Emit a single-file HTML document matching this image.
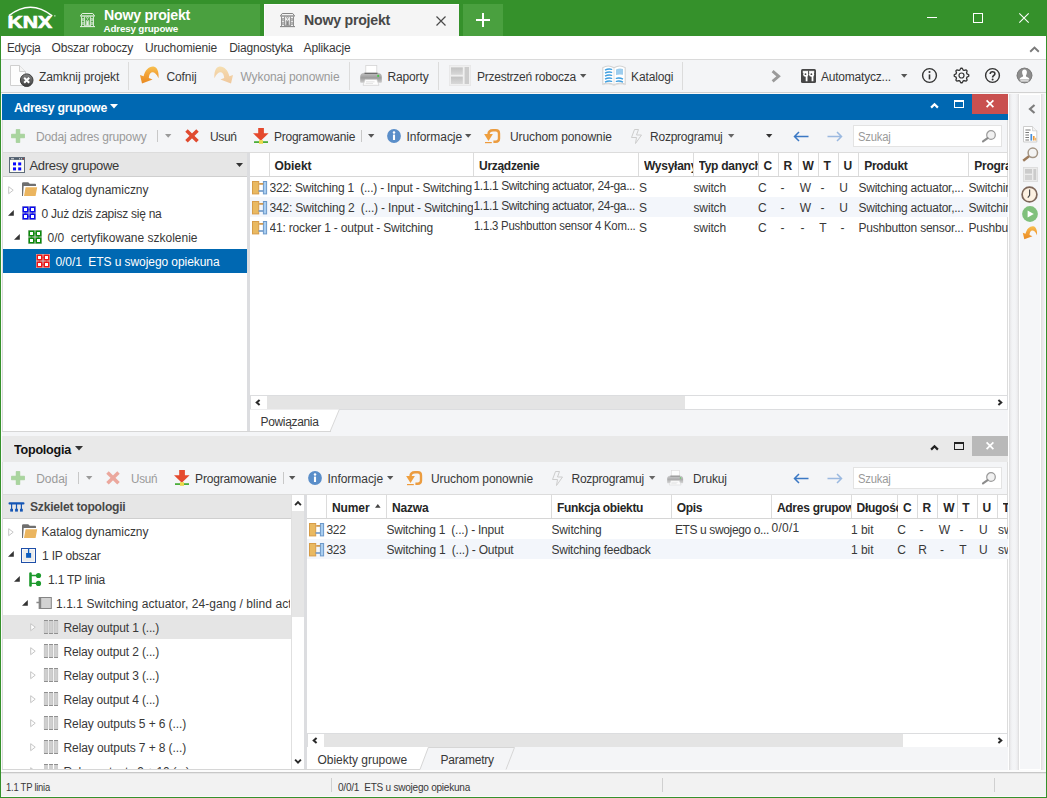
<!DOCTYPE html>
<html lang="pl"><head><meta charset="utf-8"><title>ETS5 - Nowy projekt</title><style>
html,body{margin:0;padding:0;}
body{width:1047px;height:798px;overflow:hidden;position:relative;background:#f0f0f0;font-family:"Liberation Sans",sans-serif;font-size:12px;color:#222;}
.b{position:absolute;box-sizing:border-box;}
.i{position:absolute;display:block;overflow:visible;}
.t{position:absolute;white-space:nowrap;display:block;}
</style></head><body>
<div class="b " style="left:0px;top:0px;width:1047px;height:798px;background:#35912b;"></div>
<div class="b " style="left:1px;top:36px;width:1045px;height:761px;background:#f0f0f0;"></div>
<svg class="i" style="left:6px;top:4px" width="52" height="28" viewBox="0 0 52 28"><path d="M3 11.6 Q24.5 -5.2 46.2 11.8" fill="none" stroke="#fff" stroke-width="1.7"/><text x="1.6" y="23.7" font-family="Liberation Sans, sans-serif" font-weight="700" font-size="16.5" fill="#fff" stroke="#fff" stroke-width=".7" textLength="44.6" lengthAdjust="spacingAndGlyphs">KNX</text><circle cx="48.8" cy="11.8" r="0.9" fill="#fff" opacity=".55"/></svg>
<div class="b " style="left:64px;top:4px;width:196px;height:32px;background:#4aa03f;"></div>
<div class="b " style="left:264px;top:4px;width:195px;height:32px;background:#f5f5f5;border-top:1px solid #fdfdfd;border-left:1px solid #fdfdfd;"></div>
<div class="b " style="left:463px;top:4px;width:40px;height:32px;background:#4aa03f;"></div>
<svg class="i" style="left:80px;top:13px" width="15" height="15" viewBox="0 0 15 15"><g fill="none" stroke="#e4f1e2" stroke-width="1"><path d="M0.5 2.8 L2.2 0.5 H12.8 L14.5 2.8"/><path d="M0.3 3 H14.7" stroke-width="1.3"/><path d="M1.5 3.5 V13 M13.5 3.5 V13 M4.6 3.5 V13 M10.4 3.5 V13" stroke-width=".9"/><path d="M0 13.6 H15" stroke-width="1.1"/><path d="M2.4 5.5 H3.8 V7.6 H2.4 Z M11.2 5.5 H12.6 V7.6 H11.2 Z M2.4 9.3 H3.8 V11.6 H2.4 Z M11.2 9.3 H12.6 V11.6 H11.2 Z" stroke-width=".7"/><path d="M6.3 12.6 V7.8 Q7.5 5.8 8.7 7.8 V12.6" stroke-width=".9"/><path d="M7.5 8.2 V12.4" stroke-width="1"/><circle cx="7.5" cy="4.6" r="0.9" stroke-width=".7"/><path d="M4.8 12.3 H10.2" stroke-width=".8"/></g></svg>
<svg class="i" style="left:280px;top:13px" width="15" height="15" viewBox="0 0 15 15"><g fill="none" stroke="#858585" stroke-width="1"><path d="M0.5 2.8 L2.2 0.5 H12.8 L14.5 2.8"/><path d="M0.3 3 H14.7" stroke-width="1.3"/><path d="M1.5 3.5 V13 M13.5 3.5 V13 M4.6 3.5 V13 M10.4 3.5 V13" stroke-width=".9"/><path d="M0 13.6 H15" stroke-width="1.1"/><path d="M2.4 5.5 H3.8 V7.6 H2.4 Z M11.2 5.5 H12.6 V7.6 H11.2 Z M2.4 9.3 H3.8 V11.6 H2.4 Z M11.2 9.3 H12.6 V11.6 H11.2 Z" stroke-width=".7"/><path d="M6.3 12.6 V7.8 Q7.5 5.8 8.7 7.8 V12.6" stroke-width=".9"/><path d="M7.5 8.2 V12.4" stroke-width="1"/><circle cx="7.5" cy="4.6" r="0.9" stroke-width=".7"/><path d="M4.8 12.3 H10.2" stroke-width=".8"/></g></svg>
<span class="t" id="t1" style="left:103.50px;top:5.699999999999999px;font-size:15px;line-height:18px;color:#fff;font-weight:700;letter-spacing:-0.250px;transform:scaleX(0.9431);transform-origin:0 0;">Nowy projekt</span>
<span class="t" id="t2" style="left:103.50px;top:22.8px;font-size:9.8px;line-height:12px;color:#fff;font-weight:700;letter-spacing:-0.162px;">Adresy grupowe</span>
<span class="t" id="t3" style="left:303.50px;top:11.0px;font-size:15px;line-height:18px;color:#484848;font-weight:700;letter-spacing:-0.250px;transform:scaleX(0.9431);transform-origin:0 0;">Nowy projekt</span>
<svg class="i" style="left:436px;top:15.5px" width="10" height="10" viewBox="0 0 10 10"><path d="M0.5 0.5 L9.5 9.5 M9.5 0.5 L0.5 9.5" stroke="#4a4a4a" stroke-width="1.2" fill="none"/></svg>
<svg class="i" style="left:476px;top:13px" width="14" height="14" viewBox="0 0 14 14"><path d="M7 0 V14 M0 7 H14" stroke="#fff" stroke-width="2" fill="none"/></svg>
<div class="b " style="left:927px;top:17px;width:10px;height:1px;background:#ffffff;"></div>
<svg class="i" style="left:973px;top:13px" width="10" height="10" viewBox="0 0 10 10"><rect x="0.5" y="0.5" width="9" height="9" fill="none" stroke="#fff" stroke-width="1"/></svg>
<svg class="i" style="left:1019px;top:13px" width="10" height="10" viewBox="0 0 10 10"><path d="M0.3 0.3 L9.7 9.7 M9.7 0.3 L0.3 9.7" stroke="#fff" stroke-width="1.1" fill="none"/></svg>
<div class="b " style="left:1px;top:36px;width:1045px;height:23px;background:#ffffff;"></div>
<div class="b " style="left:1px;top:59px;width:1045px;height:1px;background:#dadada;"></div>
<span class="t" id="t4" style="left:6.50px;top:39.5px;font-size:12px;line-height:16px;color:#383838;letter-spacing:-0.250px;transform:scaleX(0.9701);transform-origin:0 0;">Edycja</span>
<span class="t" id="t5" style="left:51.50px;top:39.5px;font-size:12px;line-height:16px;color:#383838;letter-spacing:-0.167px;">Obszar roboczy</span>
<span class="t" id="t6" style="left:144.90px;top:39.5px;font-size:12px;line-height:16px;color:#383838;letter-spacing:-0.154px;">Uruchomienie</span>
<span class="t" id="t7" style="left:229.20px;top:39.5px;font-size:12px;line-height:16px;color:#383838;letter-spacing:-0.232px;">Diagnostyka</span>
<span class="t" id="t8" style="left:303.50px;top:39.5px;font-size:12px;line-height:16px;color:#383838;letter-spacing:-0.115px;">Aplikacje</span>
<svg class="i" style="left:1028.5px;top:45.5px" width="11" height="7" viewBox="0 0 11 7"><path d="M1.2 5.8 L5.5 1.6 L9.8 5.8" fill="none" stroke="#7a7a7a" stroke-width="1.9"/></svg>
<div class="b " style="left:1px;top:60px;width:1045px;height:32px;background:#f4f5f7;"></div>
<div class="b " style="left:1px;top:92px;width:1045px;height:1px;background:#d2d2d2;"></div>
<div class="b " style="left:1px;top:93px;width:1045px;height:1px;background:#fafafa;"></div>
<svg class="i" style="left:10px;top:64px" width="24" height="24" viewBox="0 0 24 24"><defs><linearGradient id="dcg" x1="0" y1="0" x2="0" y2="1"><stop offset="0" stop-color="#858585"/><stop offset="1" stop-color="#3c3c3c"/></linearGradient></defs><path d="M0.5 1.5 H9.5 L15.5 7.5 V21.5 H0.5 Z" fill="#fdfdfd" stroke="#cfcfcf"/><path d="M9.5 1.5 V7.5 H15.5" fill="#f4f4f4" stroke="#cfcfcf"/><circle cx="16.7" cy="16.2" r="6.3" fill="url(#dcg)" stroke="#3d3d3d" stroke-width="1"/><path d="M14.2 13.7 L19.2 18.7 M19.2 13.7 L14.2 18.7" stroke="#fff" stroke-width="2"/></svg>
<span class="t" id="t9" style="left:39.00px;top:68.5px;font-size:12px;line-height:16px;color:#383838;letter-spacing:-0.077px;">Zamknij projekt</span>
<div class="b " style="left:128px;top:62px;width:1px;height:28px;background:#dcdcdc;"></div>
<svg class="i" style="left:139px;top:65px" width="22.0" height="20.0" viewBox="0 0 22.0 20.0"><defs><linearGradient id="ug139" x1="0" y1="0" x2="0" y2="1"><stop offset="0" stop-color="#f7c050"/><stop offset=".45" stop-color="#f2a238"/><stop offset="1" stop-color="#e98a22"/></linearGradient></defs><g transform="scale(1.0)" opacity="1.0"><path d="M3 18.6 L1 10 L4.6 11.3 C6 5 10 1.2 14.5 1.5 C18.6 2 20.1 8 19.5 13.2 C17.6 8.6 15 6.9 12.9 7.3 C11 7.7 10 10 9.8 13.1 L13.6 14.6 Z" fill="url(#ug139)"/></g></svg>
<span class="t" id="t10" style="left:166.50px;top:68.5px;font-size:12px;line-height:16px;color:#383838;letter-spacing:-0.115px;">Cofnij</span>
<svg class="i" style="left:212px;top:65px" width="22.0" height="20.0" viewBox="0 0 22.0 20.0"><defs><linearGradient id="ug212" x1="0" y1="0" x2="0" y2="1"><stop offset="0" stop-color="#f7c050"/><stop offset=".45" stop-color="#f2a238"/><stop offset="1" stop-color="#e98a22"/></linearGradient></defs><g transform="translate(22.0,0) scale(-1.0,1.0)" opacity="0.42"><path d="M3 18.6 L1 10 L4.6 11.3 C6 5 10 1.2 14.5 1.5 C18.6 2 20.1 8 19.5 13.2 C17.6 8.6 15 6.9 12.9 7.3 C11 7.7 10 10 9.8 13.1 L13.6 14.6 Z" fill="url(#ug212)"/></g></svg>
<span class="t" id="t11" style="left:240.50px;top:68.5px;font-size:12px;line-height:16px;color:#9a9a9a;letter-spacing:-0.102px;">Wykonaj ponownie</span>
<div class="b " style="left:349px;top:62px;width:1px;height:28px;background:#dcdcdc;"></div>
<svg class="i" style="left:360px;top:65px" width="22.0" height="21.0" viewBox="0 0 22 21"><defs><linearGradient id="pg360" x1="0" y1="0" x2="0" y2="1"><stop offset="0" stop-color="#c2c2c2"/><stop offset=".5" stop-color="#9c9c9c"/><stop offset="1" stop-color="#cdcdcd"/></linearGradient></defs><g opacity="1.0"><rect x="5.8" y="0.4" width="11" height="8" fill="#fff" stroke="#d4d4d4" stroke-width=".8"/><path d="M4 7.8 H18 Q21.8 8.2 21.8 12 V17 Q21.8 17.8 21 17.8 H1 Q0.2 17.8 0.2 17 V12 Q0.2 8.2 4 7.8 Z" fill="url(#pg360)"/><path d="M4.5 8.3 H17.5" stroke="#5e5e5e" stroke-width="1.1"/><path d="M5.2 14.4 H16.8 L19 20.3 H3 Z" fill="#fdfdfd" stroke="#cfcfcf" stroke-width=".7"/><path d="M6 16.8 H14.5 M5.6 18.4 H13" stroke="#dcdcdc" stroke-width=".8"/><circle cx="18.2" cy="10.9" r="1.05" fill="#44c544"/></g></svg>
<span class="t" id="t12" style="left:387.50px;top:68.5px;font-size:12px;line-height:16px;color:#383838;letter-spacing:-0.147px;">Raporty</span>
<div class="b " style="left:438px;top:62px;width:1px;height:28px;background:#dcdcdc;"></div>
<svg class="i" style="left:449.2px;top:65.3px" width="22" height="21" viewBox="0 0 22 21"><defs><linearGradient id="lig" x1="0" y1="0" x2="0" y2="1"><stop offset="0" stop-color="#c2c2c2"/><stop offset="1" stop-color="#d8d8d8"/></linearGradient></defs><rect x="0.4" y="0.4" width="21.2" height="20.2" fill="#efefef" stroke="#e6e6e6" stroke-width=".8"/><rect x="2" y="2.4" width="11.8" height="7.4" fill="url(#lig)"/><rect x="2" y="11.6" width="11.8" height="7.4" fill="url(#lig)"/><rect x="15.6" y="2" width="4.4" height="17" fill="#cccccc"/></svg>
<span class="t" id="t13" style="left:477.00px;top:68.5px;font-size:12px;line-height:16px;color:#383838;letter-spacing:-0.244px;">Przestrzeń robocza</span>
<svg class="i" style="left:580.3px;top:73.85px" width="6.4" height="3.7" viewBox="0 0 6.4 3.7"><path d="M0 0 H6.4 L3.2 3.7 Z" fill="#555"/></svg>
<svg class="i" style="left:602px;top:65px" width="24" height="21" viewBox="0 0 24 21"><path d="M0.8 2.6 C4 0.6 8.5 0.6 12 2.8 C15.5 0.6 20 0.6 23.2 2.6 V19.2 C20 17.8 15.5 17.8 12 19.8 C8.5 17.8 4 17.8 0.8 19.2 Z" fill="#fff" stroke="#d2d2d2" stroke-width="1.1"/><path d="M1 19.8 C4 18.6 8.5 18.6 12 20.4 C15.5 18.6 20 18.6 23 19.8" fill="none" stroke="#dcdcdc" stroke-width=".9"/><path d="M12 3 V19.6" stroke="#e2e2e2" stroke-width="1"/><g fill="none" stroke="#3f9fe0" stroke-width="1.3"><path d="M3 5.1000000000000005 Q6.5 3.3000000000000003 10.2 4.5"/><path d="M3 8.1 Q6.5 6.3 10.2 7.5"/><path d="M3 11.1 Q6.5 9.299999999999999 10.2 10.5"/><path d="M3 14.1 Q6.5 12.299999999999999 10.2 13.5"/><path d="M3 17.099999999999998 Q6.5 15.299999999999999 10.2 16.5"/><path d="M13.8 13.5 Q17.5 12.299999999999999 21 14.1"/><path d="M13.8 16.5 Q17.5 15.299999999999999 21 17.099999999999998"/></g><path d="M14 4.4 Q17.5 3 21 4 V9.8 Q17.5 9 14 10 Z" fill="#9dcdee"/></svg>
<span class="t" id="t14" style="left:631.10px;top:68.5px;font-size:12px;line-height:16px;color:#383838;letter-spacing:-0.134px;">Katalogi</span>
<div class="b " style="left:682px;top:62px;width:1px;height:28px;background:#dcdcdc;"></div>
<svg class="i" style="left:771px;top:69.5px" width="10" height="13" viewBox="0 0 10 13"><path d="M1.6 1.2 L7.6 6.3 L1.6 11.4" fill="none" stroke="#9a9a9a" stroke-width="2.9"/></svg>
<svg class="i" style="left:800.5px;top:69px" width="15" height="14" viewBox="0 0 15 14"><rect x="0" y="0" width="15" height="14" rx="1.5" fill="#474747"/><path d="M1.8 1.8 H13.2 V4 H1.8 Z" fill="#fff" opacity=".9"/><circle cx="4.7" cy="5.2" r="2.5" fill="#fff"/><circle cx="10.6" cy="5.2" r="2.5" fill="#fff"/><path d="M5.6 5 V12.2 M11.5 5 V12.2" stroke="#fff" stroke-width="1.8"/><circle cx="4.5" cy="5.2" r="0.9" fill="#474747"/><circle cx="10.4" cy="5.2" r="0.9" fill="#474747"/><path d="M7.6 1.5 V4.2" stroke="#474747" stroke-width="1"/></svg>
<span class="t" id="t15" style="left:821.00px;top:68.5px;font-size:12px;line-height:16px;color:#383838;letter-spacing:-0.216px;">Automatycz...</span>
<svg class="i" style="left:900.6px;top:73.85px" width="6.4" height="3.7" viewBox="0 0 6.4 3.7"><path d="M0 0 H6.4 L3.2 3.7 Z" fill="#555"/></svg>
<svg class="i" style="left:920.5px;top:67.3px" width="17" height="17" viewBox="0 0 17 17"><circle cx="8.5" cy="8.5" r="6.9" fill="none" stroke="#333" stroke-width="1.4"/><path d="M8.5 7.4 V12.4" stroke="#333" stroke-width="1.6"/><circle cx="8.5" cy="5" r="1.05" fill="#333"/></svg>
<svg class="i" style="left:952.5px;top:67.3px" width="17" height="17" viewBox="0 0 17 17"><path d="M15.76 7.78 L15.76 9.22 L13.95 10.15 L13.53 11.19 L14.14 13.13 L13.13 14.14 L11.19 13.53 L10.15 13.95 L9.22 15.76 L7.78 15.76 L6.85 13.95 L5.81 13.53 L3.87 14.14 L2.86 13.13 L3.47 11.19 L3.05 10.15 L1.24 9.22 L1.24 7.78 L3.05 6.85 L3.47 5.81 L2.86 3.87 L3.87 2.86 L5.81 3.47 L6.85 3.05 L7.78 1.24 L9.22 1.24 L10.15 3.05 L11.19 3.47 L13.13 2.86 L14.14 3.87 L13.53 5.81 L13.95 6.85 Z" fill="none" stroke="#333" stroke-width="1.3" stroke-linejoin="round"/><circle cx="8.5" cy="8.5" r="2.5" fill="none" stroke="#333" stroke-width="1.2"/></svg>
<svg class="i" style="left:984.4px;top:67.3px" width="17" height="17" viewBox="0 0 17 17"><circle cx="8.5" cy="8.5" r="6.9" fill="none" stroke="#333" stroke-width="1.4"/><path d="M6.2 6.9 C6.2 4 10.9 4 10.9 6.8 C10.9 8.5 8.6 8.4 8.6 10.5" fill="none" stroke="#333" stroke-width="1.6"/><circle cx="8.6" cy="12.6" r="1" fill="#333"/></svg>
<svg class="i" style="left:1016.4px;top:67.3px" width="17" height="17" viewBox="0 0 17 17"><circle cx="8.5" cy="8.5" r="7.8" fill="#8d8d8d"/><circle cx="8.5" cy="8.5" r="7.4" fill="none" stroke="#7a7a7a" stroke-width=".8"/><path d="M8.5 2.6 C10.3 2.6 11 4 10.9 5.6 C10.8 7.2 10.2 8 9.9 8.6 C9.8 9.6 10.6 10 12 10.6 C13.2 11.1 13.4 12 13.3 12.6 H3.7 C3.6 12 3.8 11.1 5 10.6 C6.4 10 7.2 9.6 7.1 8.6 C6.8 8 6.2 7.2 6.1 5.6 C6 4 6.7 2.6 8.5 2.6 Z" fill="#fff"/><path d="M4.4 13.9 H12.6" stroke="#fff" stroke-width="1.1"/></svg>
<div class="b " style="left:1008px;top:94px;width:1px;height:676px;background:#ffffff;"></div>
<div class="b " style="left:1009px;top:94px;width:10px;height:676px;background:linear-gradient(to right,#dadada 0,#e9e9eb 12%,#f2f3f5 30%,#f4f5f7 50%,#f2f3f5 70%,#e9e9eb 88%,#dadada 100%);"></div>
<div class="b " style="left:1019px;top:94px;width:22px;height:676px;background:#ffffff;"></div>
<div class="b " style="left:1020px;top:95px;width:20px;height:674px;background:#f5f6f8;"></div>
<div class="b " style="left:1041px;top:94px;width:5px;height:676px;background:linear-gradient(to right,#dcdcdc 0,#e8e8ea 30%,#f3f3f5 75%,#ffffff 100%);"></div>
<div class="b " style="left:2px;top:94px;width:1006px;height:338px;background:#ffffff;"></div>
<div class="b " style="left:2px;top:94px;width:1006px;height:26px;background:#0068b2;"></div>
<span class="t" id="t16" style="left:13.50px;top:99.5px;font-size:13px;line-height:16px;color:#fff;font-weight:700;letter-spacing:-0.250px;transform:scaleX(0.9455);transform-origin:0 0;">Adresy grupowe</span>
<svg class="i" style="left:110.0px;top:104.45px" width="8" height="4.5" viewBox="0 0 8 4.5"><path d="M0 0 H8 L4.0 4.5 Z" fill="#fff"/></svg>
<svg class="i" style="left:929.5px;top:101.5px" width="9" height="7" viewBox="0 0 9 7"><path d="M1.1 5.6 L4.5 2.2 L7.9 5.6" fill="none" stroke="#fff" stroke-width="2.2"/></svg>
<svg class="i" style="left:954px;top:100px" width="10" height="8" viewBox="0 0 10 8"><rect x="0.5" y="1" width="9" height="6.5" fill="none" stroke="#fff" stroke-width="1"/><path d="M0 1 H10" stroke="#fff" stroke-width="2"/></svg>
<div class="b " style="left:972px;top:94px;width:36px;height:20px;background:#c9504f;"></div>
<svg class="i" style="left:986px;top:100px" width="8" height="8" viewBox="0 0 8 8"><path d="M0.6 0.4 L7.4 7.2 M7.4 0.4 L0.6 7.2" stroke="#fff" stroke-width="1.7" fill="none"/></svg>
<div class="b " style="left:2px;top:120px;width:1006px;height:32px;background:#f4f5f7;"></div>
<div class="b " style="left:2px;top:152px;width:1006px;height:1px;background:#dcdcdc;"></div>
<svg class="i" style="left:11px;top:128.8px" width="14" height="14" viewBox="0 0 14 14"><path d="M5.2 0.5 H8.8 V5.2 H13.5 V8.8 H8.8 V13.5 H5.2 V8.8 H0.5 V5.2 H5.2 Z" fill="#a9d59e" stroke="#98c98c" stroke-width=".6" opacity="1.0"/></svg>
<span class="t" id="t17" style="left:36.00px;top:128.5px;font-size:12px;line-height:16px;color:#9a9a9a;letter-spacing:-0.153px;">Dodaj adres grupowy</span>
<div class="b " style="left:157px;top:130.0px;width:1px;height:12px;background:#c8c8c8;"></div>
<svg class="i" style="left:164.8px;top:133.85px" width="6.4" height="3.7" viewBox="0 0 6.4 3.7"><path d="M0 0 H6.4 L3.2 3.7 Z" fill="#9a9a9a"/></svg>
<svg class="i" style="left:185px;top:128.7px" width="14" height="14" viewBox="0 0 14 14"><path d="M1.5 1.5 L12.5 12.3 M12.5 1.5 L1.5 12.3" stroke="#e04a2f" stroke-width="3.5" fill="none" opacity="1.0"/></svg>
<span class="t" id="t18" style="left:210.00px;top:128.5px;font-size:12px;line-height:16px;color:#383838;letter-spacing:-0.379px;">Usuń</span>
<svg class="i" style="left:252.5px;top:127.5px" width="16" height="16" viewBox="0 0 16 16"><path d="M5.2 0 H10.9 V5.2 H15.6 L7.8 12.8 L0 5.2 H5.2 Z" fill="#e5492d"/><path d="M1 14.1 H15" stroke="#4cae3a" stroke-width="1.8"/><rect x="6" y="12.2" width="4" height="3.6" fill="#ead94a"/></svg>
<span class="t" id="t19" style="left:273.90px;top:128.5px;font-size:12px;line-height:16px;color:#383838;letter-spacing:-0.219px;">Programowanie</span>
<div class="b " style="left:361px;top:130.0px;width:1px;height:12px;background:#c8c8c8;"></div>
<svg class="i" style="left:367.8px;top:133.85px" width="6.4" height="3.7" viewBox="0 0 6.4 3.7"><path d="M0 0 H6.4 L3.2 3.7 Z" fill="#555"/></svg>
<svg class="i" style="left:387px;top:128.9px" width="14" height="14" viewBox="0 0 14 14"><circle cx="7" cy="7" r="6.9" fill="#5a8ec9"/><path d="M7 5.6 V11" stroke="#fff" stroke-width="2.1"/><circle cx="7" cy="3.5" r="1.25" fill="#fff"/></svg>
<span class="t" id="t20" style="left:406.50px;top:128.5px;font-size:12px;line-height:16px;color:#383838;letter-spacing:-0.043px;">Informacje</span>
<svg class="i" style="left:465.3px;top:133.85px" width="6.4" height="3.7" viewBox="0 0 6.4 3.7"><path d="M0 0 H6.4 L3.2 3.7 Z" fill="#555"/></svg>
<svg class="i" style="left:484px;top:128px" width="17" height="16" viewBox="0 0 17 16"><path d="M4.5 6.5 C4.5 3.4 6.3 2.2 9 2.2 H11.8 C14.2 2.2 15 3.2 15 5.4 V10.6 C15 12.8 14.2 13.8 11.8 13.8 H9.4" fill="none" stroke="#eb9c40" stroke-width="2.4"/><path d="M0.1 6 H8.9 L4.5 12.9 Z" fill="#ef9f3e"/><path d="M1 14.6 H7.8" stroke="#ee9a3a" stroke-width="1.2"/></svg>
<span class="t" id="t21" style="left:510.00px;top:128.5px;font-size:12px;line-height:16px;color:#383838;letter-spacing:-0.099px;">Uruchom ponownie</span>
<svg class="i" style="left:630.5px;top:129px" width="11" height="15" viewBox="0 0 11 15"><path d="M3.5 0.5 H7.5 L5.5 6 H10.5 L4.5 14.5 L5.5 8.5 H0.5 Z" fill="none" stroke="#cdcdcd" stroke-width="1" stroke-linejoin="round"/></svg>
<span class="t" id="t22" style="left:650.10px;top:128.5px;font-size:12px;line-height:16px;color:#383838;letter-spacing:-0.248px;">Rozprogramuj</span>
<svg class="i" style="left:727.8px;top:133.85px" width="6.4" height="3.7" viewBox="0 0 6.4 3.7"><path d="M0 0 H6.4 L3.2 3.7 Z" fill="#666"/></svg>
<svg class="i" style="left:765.8px;top:133.85px" width="6.4" height="3.7" viewBox="0 0 6.4 3.7"><path d="M0 0 H6.4 L3.2 3.7 Z" fill="#333"/></svg>
<svg class="i" style="left:793px;top:131px" width="16" height="11" viewBox="0 0 16 11"><path d="M15.5 5.5 H1.5 M6 1 L1.5 5.5 L6 10" fill="none" stroke="#3b78c4" stroke-width="1.5"/></svg>
<svg class="i" style="left:826.5px;top:131px" width="16" height="11" viewBox="0 0 16 11"><path d="M0.5 5.5 H14.5 M10 1 L14.5 5.5 L10 10" fill="none" stroke="#9bb9e0" stroke-width="1.5"/></svg>
<div class="b " style="left:853px;top:125px;width:149px;height:22px;background:#ffffff;border:1px solid #e3e3e3;"></div>
<span class="t" id="t23" style="left:858.00px;top:128.5px;font-size:12px;line-height:16px;color:#9a9a9a;letter-spacing:-0.250px;transform:scaleX(0.9412);transform-origin:0 0;">Szukaj</span>
<svg class="i" style="left:981px;top:129.5px" width="15" height="15" viewBox="0 0 15 15"><circle cx="10" cy="5" r="4.3" fill="#f1f1f1" stroke="#9a9a9a" stroke-width="1.2"/><path d="M6.6 8.2 L2 11.4" stroke="#8c8c8c" stroke-width="2.1" stroke-linecap="round"/></svg>
<div class="b " style="left:1007px;top:120px;width:1px;height:312px;background:#dcdcdc;"></div>
<div class="b " style="left:2px;top:153px;width:245px;height:23px;background:#e6e6e6;"></div>
<div class="b " style="left:2px;top:176px;width:245px;height:1px;background:#cfcfcf;"></div>
<div class="b " style="left:247px;top:153px;width:3px;height:279px;background:#dcdde0;"></div>
<div class="b " style="left:1px;top:94px;width:1px;height:676px;background:#fafafa;"></div>
<div class="b " style="left:2px;top:120px;width:1px;height:312px;background:#dcdcdc;"></div>
<svg class="i" style="left:9px;top:157px" width="16" height="16" viewBox="0 0 16 16"><rect x="0.5" y="0.5" width="15" height="15" fill="#fdfdf4" stroke="#5f6c7b"/><path d="M1 1.9 H15" stroke="#4f5d6d" stroke-width="2"/><path d="M2 1.8 H5" stroke="#e8e8e8" stroke-width="1"/><path d="M10 1.8 H11 M12 1.8 H13" stroke="#f0f0f0" stroke-width="1"/><path d="M14 1.8 H15" stroke="#d03020" stroke-width="1"/><g fill="#0a0aff"><rect x="4" y="5.4" width="3" height="3"/><rect x="9.2" y="5.4" width="3" height="3"/><rect x="4" y="10.4" width="3" height="3"/><rect x="9.2" y="10.4" width="3" height="3"/></g></svg>
<span class="t" id="t24" style="left:29.50px;top:157.5px;font-size:13px;line-height:16px;color:#383838;letter-spacing:-0.318px;">Adresy grupowe</span>
<svg class="i" style="left:235.5px;top:162.7px" width="7" height="4" viewBox="0 0 7 4"><path d="M0 0 H7 L3.5 4 Z" fill="#333"/></svg>
<svg class="i" style="left:7.5px;top:185.8px" width="7" height="9" viewBox="0 0 7 9"><path d="M0.7 0.7 L5.2 4.2 L0.7 7.7 Z" fill="#fff" stroke="#c6c6c6" stroke-width="1"/></svg>
<svg class="i" style="left:21px;top:182px" width="17" height="15" viewBox="0 0 17 15"><path d="M1 14 V1.6 Q1 0.2 2.4 0.2 H7.2 L8.8 1.8 H14.2 Q15 1.8 15 2.8 V4 H2.7 L2 14 Z" fill="#6f6f6f"/><path d="M4.6 5.2 H16.2 L14.6 13.9 H3 Z" fill="#ebb55f"/></svg>
<span class="t" id="t25" style="left:41.50px;top:182.0px;font-size:12px;line-height:16px;color:#383838;letter-spacing:-0.022px;">Katalog dynamiczny</span>
<svg class="i" style="left:8px;top:210.3px" width="6" height="6" viewBox="0 0 6 6"><path d="M5.8 0 V5.8 H0 Z" fill="#333"/></svg>
<svg class="i" style="left:22px;top:206px" width="14" height="14" viewBox="0 0 14 14"><rect x="0" y="0" width="14" height="14" fill="#c8c8c8"/><g fill="#fff" stroke="#0a0af0" stroke-width="1.5"><rect x="1.25" y="1.25" width="4.5" height="4.5"/><rect x="1.25" y="8.25" width="4.5" height="4.5"/><rect x="8.25" y="1.25" width="4.5" height="4.5"/><rect x="8.25" y="8.25" width="4.5" height="4.5"/></g><path d="M6.5 3.5 H7.5 M6.5 10.5 H7.5 M3.5 6.5 V7.5 M10.5 6.5 V7.5" stroke="#0a0af0" stroke-width="1.5"/></svg>
<span class="t" id="t26" style="left:41.50px;top:206.0px;font-size:12px;line-height:16px;color:#383838;letter-spacing:-0.253px;">0 Już dziś zapisz się na</span>
<svg class="i" style="left:14px;top:234.3px" width="6" height="6" viewBox="0 0 6 6"><path d="M5.8 0 V5.8 H0 Z" fill="#333"/></svg>
<svg class="i" style="left:28px;top:230px" width="14" height="14" viewBox="0 0 14 14"><rect x="0" y="0" width="14" height="14" fill="#c8c8c8"/><g fill="#fff" stroke="#0a8a0a" stroke-width="1.5"><rect x="1.25" y="1.25" width="4.5" height="4.5"/><rect x="1.25" y="8.25" width="4.5" height="4.5"/><rect x="8.25" y="1.25" width="4.5" height="4.5"/><rect x="8.25" y="8.25" width="4.5" height="4.5"/></g><path d="M6.5 3.5 H7.5 M6.5 10.5 H7.5 M3.5 6.5 V7.5 M10.5 6.5 V7.5" stroke="#0a8a0a" stroke-width="1.5"/></svg>
<span class="t" id="t27" style="left:47.50px;top:230.0px;font-size:12px;line-height:16px;color:#383838;letter-spacing:-0.003px;">0/0 &nbsp;certyfikowane szkolenie</span>
<div class="b " style="left:3px;top:249px;width:244px;height:24px;background:#0068b2;"></div>
<svg class="i" style="left:36px;top:254px" width="14" height="14" viewBox="0 0 14 14"><rect x="0" y="0" width="14" height="14" fill="#c8c8c8"/><g fill="#fff" stroke="#f01414" stroke-width="1.5"><rect x="1.25" y="1.25" width="4.5" height="4.5"/><rect x="1.25" y="8.25" width="4.5" height="4.5"/><rect x="8.25" y="1.25" width="4.5" height="4.5"/><rect x="8.25" y="8.25" width="4.5" height="4.5"/></g><path d="M6.5 3.5 H7.5 M6.5 10.5 H7.5 M3.5 6.5 V7.5 M10.5 6.5 V7.5" stroke="#f01414" stroke-width="1.5"/></svg>
<span class="t" id="t28" style="left:55.50px;top:253.5px;font-size:12px;line-height:16px;color:#fff;letter-spacing:-0.073px;">0/0/1 &nbsp;ETS u swojego opiekuna</span>
<div class="b " style="left:250px;top:176px;width:758px;height:1px;background:#d6d6d6;"></div>
<div class="b " style="left:269px;top:153px;width:1px;height:23px;background:#dcdcdc;"></div>
<div class="b " style="left:473px;top:153px;width:1px;height:23px;background:#dcdcdc;"></div>
<div class="b " style="left:638px;top:153px;width:1px;height:23px;background:#dcdcdc;"></div>
<div class="b " style="left:693px;top:153px;width:1px;height:23px;background:#dcdcdc;"></div>
<div class="b " style="left:758px;top:153px;width:1px;height:23px;background:#dcdcdc;"></div>
<div class="b " style="left:778px;top:153px;width:1px;height:23px;background:#dcdcdc;"></div>
<div class="b " style="left:798px;top:153px;width:1px;height:23px;background:#dcdcdc;"></div>
<div class="b " style="left:818px;top:153px;width:1px;height:23px;background:#dcdcdc;"></div>
<div class="b " style="left:838px;top:153px;width:1px;height:23px;background:#dcdcdc;"></div>
<div class="b " style="left:858px;top:153px;width:1px;height:23px;background:#dcdcdc;"></div>
<div class="b " style="left:968px;top:153px;width:1px;height:23px;background:#dcdcdc;"></div>
<span class="t" id="t29" style="left:274.50px;top:157.5px;font-size:12px;line-height:16px;color:#262626;font-weight:700;letter-spacing:-0.057px;">Obiekt</span>
<span class="t" id="t30" style="left:479.00px;top:157.5px;font-size:12px;line-height:16px;color:#262626;font-weight:700;letter-spacing:-0.286px;">Urządzenie</span>
<span class="t" id="t31" style="left:644.00px;top:157.5px;font-size:12px;line-height:16px;color:#262626;font-weight:700;letter-spacing:-0.261px;width:49.00px;overflow:hidden;">Wysyłany</span>
<span class="t" id="t32" style="left:698.50px;top:157.5px;font-size:12px;line-height:16px;color:#262626;font-weight:700;letter-spacing:-0.261px;width:59.50px;overflow:hidden;">Typ danych</span>
<span class="t" id="t33" style="left:763.50px;top:157.5px;font-size:12px;line-height:16px;color:#262626;font-weight:700;letter-spacing:-0.261px;">C</span>
<span class="t" id="t34" style="left:783.50px;top:157.5px;font-size:12px;line-height:16px;color:#262626;font-weight:700;letter-spacing:-0.261px;">R</span>
<span class="t" id="t35" style="left:802.50px;top:157.5px;font-size:12px;line-height:16px;color:#262626;font-weight:700;letter-spacing:-0.261px;">W</span>
<span class="t" id="t36" style="left:823.50px;top:157.5px;font-size:12px;line-height:16px;color:#262626;font-weight:700;letter-spacing:-0.261px;">T</span>
<span class="t" id="t37" style="left:843.50px;top:157.5px;font-size:12px;line-height:16px;color:#262626;font-weight:700;letter-spacing:-0.261px;">U</span>
<span class="t" id="t38" style="left:864.20px;top:157.5px;font-size:12px;line-height:16px;color:#262626;font-weight:700;letter-spacing:-0.292px;">Produkt</span>
<span class="t" id="t39" style="left:974.30px;top:157.5px;font-size:12px;line-height:16px;color:#262626;font-weight:700;letter-spacing:-0.261px;width:33.70px;overflow:hidden;">Program aplikacyjny</span>
<div class="b " style="left:250px;top:197px;width:758px;height:20px;background:#f3f6fb;"></div>
<svg class="i" style="left:252px;top:181.0px" width="15" height="14" viewBox="0 0 15 14"><rect x="0.5" y="0.5" width="6.2" height="12.4" fill="#e9b961" stroke="#d69c48"/><rect x="11.4" y="0.5" width="3.2" height="12.4" fill="#a9cef1" stroke="#6c98c9"/><path d="M7.2 2.9 H11.2" stroke="#cb9040" stroke-width="1.6"/><path d="M6.6 10 H11" stroke="#6c98c9" stroke-width="1.6"/></svg>
<span class="t" id="t40" style="left:269.50px;top:179.5px;font-size:12px;line-height:16px;color:#383838;letter-spacing:-0.225px;width:203.50px;overflow:hidden;">322: Switching 1 &nbsp;(...) - Input - Switching</span>
<span class="t" id="t41" style="left:473.50px;top:177.5px;font-size:12px;line-height:16px;color:#383838;letter-spacing:-0.391px;width:164.50px;overflow:hidden;">1.1.1 Switching actuator, 24-ga...</span>
<span class="t" id="t42" style="left:639.00px;top:179.5px;font-size:12px;line-height:16px;color:#383838;letter-spacing:-0.187px;">S</span>
<span class="t" id="t43" style="left:693.50px;top:179.5px;font-size:12px;line-height:16px;color:#383838;letter-spacing:-0.141px;">switch</span>
<span class="t" id="t44" style="left:758.01px;top:179.5px;font-size:12px;line-height:16px;color:#383838;">C</span>
<span class="t" id="t45" style="left:780.50px;top:179.5px;font-size:12px;line-height:16px;color:#383838;letter-spacing:-0.187px;">-</span>
<span class="t" id="t46" style="left:799.69px;top:179.5px;font-size:12px;line-height:16px;color:#383838;">W</span>
<span class="t" id="t47" style="left:820.50px;top:179.5px;font-size:12px;line-height:16px;color:#383838;letter-spacing:-0.187px;">-</span>
<span class="t" id="t48" style="left:839.16px;top:179.5px;font-size:12px;line-height:16px;color:#383838;">U</span>
<span class="t" id="t49" style="left:858.50px;top:179.5px;font-size:12px;line-height:16px;color:#383838;letter-spacing:-0.261px;">Switching actuator,...</span>
<span class="t" id="t50" style="left:968.50px;top:179.5px;font-size:12px;line-height:16px;color:#383838;letter-spacing:-0.187px;width:39.50px;overflow:hidden;">Switching actuator</span>
<svg class="i" style="left:252px;top:201.0px" width="15" height="14" viewBox="0 0 15 14"><rect x="0.5" y="0.5" width="6.2" height="12.4" fill="#e9b961" stroke="#d69c48"/><rect x="11.4" y="0.5" width="3.2" height="12.4" fill="#a9cef1" stroke="#6c98c9"/><path d="M7.2 2.9 H11.2" stroke="#cb9040" stroke-width="1.6"/><path d="M6.6 10 H11" stroke="#6c98c9" stroke-width="1.6"/></svg>
<span class="t" id="t51" style="left:269.50px;top:199.5px;font-size:12px;line-height:16px;color:#383838;letter-spacing:-0.187px;width:203.50px;overflow:hidden;">342: Switching 2 &nbsp;(...) - Input - Switching</span>
<span class="t" id="t52" style="left:473.50px;top:197.5px;font-size:12px;line-height:16px;color:#383838;letter-spacing:-0.391px;width:164.50px;overflow:hidden;">1.1.1 Switching actuator, 24-ga...</span>
<span class="t" id="t53" style="left:639.00px;top:199.5px;font-size:12px;line-height:16px;color:#383838;letter-spacing:-0.187px;">S</span>
<span class="t" id="t54" style="left:693.50px;top:199.5px;font-size:12px;line-height:16px;color:#383838;letter-spacing:-0.141px;">switch</span>
<span class="t" id="t55" style="left:758.01px;top:199.5px;font-size:12px;line-height:16px;color:#383838;">C</span>
<span class="t" id="t56" style="left:780.50px;top:199.5px;font-size:12px;line-height:16px;color:#383838;letter-spacing:-0.187px;">-</span>
<span class="t" id="t57" style="left:799.69px;top:199.5px;font-size:12px;line-height:16px;color:#383838;">W</span>
<span class="t" id="t58" style="left:820.50px;top:199.5px;font-size:12px;line-height:16px;color:#383838;letter-spacing:-0.187px;">-</span>
<span class="t" id="t59" style="left:839.16px;top:199.5px;font-size:12px;line-height:16px;color:#383838;">U</span>
<span class="t" id="t60" style="left:858.50px;top:199.5px;font-size:12px;line-height:16px;color:#383838;letter-spacing:-0.261px;">Switching actuator,...</span>
<span class="t" id="t61" style="left:968.50px;top:199.5px;font-size:12px;line-height:16px;color:#383838;letter-spacing:-0.187px;width:39.50px;overflow:hidden;">Switching actuator</span>
<svg class="i" style="left:252px;top:221.0px" width="15" height="14" viewBox="0 0 15 14"><rect x="0.5" y="0.5" width="6.2" height="12.4" fill="#e9b961" stroke="#d69c48"/><rect x="11.4" y="0.5" width="3.2" height="12.4" fill="#a9cef1" stroke="#6c98c9"/><path d="M7.2 2.9 H11.2" stroke="#cb9040" stroke-width="1.6"/><path d="M6.6 10 H11" stroke="#6c98c9" stroke-width="1.6"/></svg>
<span class="t" id="t62" style="left:269.50px;top:219.5px;font-size:12px;line-height:16px;color:#383838;letter-spacing:-0.182px;width:203.50px;overflow:hidden;">41: rocker 1 - output - Switching</span>
<span class="t" id="t63" style="left:473.50px;top:217.5px;font-size:12px;line-height:16px;color:#383838;letter-spacing:-0.250px;transform:scaleX(0.9494);transform-origin:0 0;width:173.27px;overflow:hidden;">1.1.3 Pushbutton sensor 4 Kom...</span>
<span class="t" id="t64" style="left:639.00px;top:219.5px;font-size:12px;line-height:16px;color:#383838;letter-spacing:-0.187px;">S</span>
<span class="t" id="t65" style="left:693.50px;top:219.5px;font-size:12px;line-height:16px;color:#383838;letter-spacing:-0.141px;">switch</span>
<span class="t" id="t66" style="left:758.01px;top:219.5px;font-size:12px;line-height:16px;color:#383838;">C</span>
<span class="t" id="t67" style="left:780.50px;top:219.5px;font-size:12px;line-height:16px;color:#383838;letter-spacing:-0.187px;">-</span>
<span class="t" id="t68" style="left:800.50px;top:219.5px;font-size:12px;line-height:16px;color:#383838;letter-spacing:-0.187px;">-</span>
<span class="t" id="t69" style="left:819.33px;top:219.5px;font-size:12px;line-height:16px;color:#383838;">T</span>
<span class="t" id="t70" style="left:840.50px;top:219.5px;font-size:12px;line-height:16px;color:#383838;letter-spacing:-0.187px;">-</span>
<span class="t" id="t71" style="left:858.50px;top:219.5px;font-size:12px;line-height:16px;color:#383838;letter-spacing:-0.220px;">Pushbutton sensor...</span>
<span class="t" id="t72" style="left:968.50px;top:219.5px;font-size:12px;line-height:16px;color:#383838;letter-spacing:-0.187px;width:39.50px;overflow:hidden;">Pushbutton sensor</span>
<div class="b " style="left:250px;top:395px;width:758px;height:15px;background:#ffffff;border:1px solid #dcdddf;"></div>
<div class="b " style="left:267px;top:396px;width:418px;height:13px;background:#e4e4e4;"></div>
<svg class="i" style="left:255px;top:399px" width="6" height="7" viewBox="0 0 6 7"><path d="M4.6 0.9 L1.7 3.5 L4.6 6.1" fill="none" stroke="#2a2a2a" stroke-width="2"/></svg>
<svg class="i" style="left:997px;top:399px" width="6" height="7" viewBox="0 0 6 7"><path d="M1.4 0.9 L4.3 3.5 L1.4 6.1" fill="none" stroke="#2a2a2a" stroke-width="2"/></svg>
<div class="b " style="left:250px;top:410px;width:758px;height:22px;background:#f4f5f7;"></div>
<svg class="i" style="left:250px;top:409px" width="100" height="23" viewBox="0 0 100 23"><path d="M0 0.5 H89.3 L80.2 22.3 H0 Z" fill="#fff"/><path d="M89.3 0.5 L80.2 22.3" stroke="#d9d9d9" stroke-width="1" fill="none"/></svg>
<span class="t" id="t73" style="left:260.50px;top:413.5px;font-size:12px;line-height:16px;color:#383838;letter-spacing:-0.338px;">Powiązania</span>
<div class="b " style="left:2px;top:432px;width:1006px;height:4px;background:#f4f5f7;"></div>
<div class="b " style="left:2px;top:431px;width:329px;height:1px;background:#d6d6d6;"></div>
<div class="b " style="left:2px;top:436px;width:1006px;height:335px;background:#ffffff;"></div>
<div class="b " style="left:2px;top:436px;width:1006px;height:26px;background:#e9e9e9;"></div>
<span class="t" id="t74" style="left:13.50px;top:441.5px;font-size:13px;line-height:16px;color:#111;font-weight:700;letter-spacing:-0.250px;transform:scaleX(0.9679);transform-origin:0 0;">Topologia</span>
<svg class="i" style="left:74.5px;top:446.45px" width="8" height="4.5" viewBox="0 0 8 4.5"><path d="M0 0 H8 L4.0 4.5 Z" fill="#333"/></svg>
<svg class="i" style="left:929.5px;top:443.5px" width="9" height="7" viewBox="0 0 9 7"><path d="M1.1 5.6 L4.5 2.2 L7.9 5.6" fill="none" stroke="#222" stroke-width="2.2"/></svg>
<svg class="i" style="left:954px;top:442px" width="10" height="8" viewBox="0 0 10 8"><rect x="0.5" y="1" width="9" height="6.5" fill="none" stroke="#222" stroke-width="1"/><path d="M0 1 H10" stroke="#222" stroke-width="2"/></svg>
<div class="b " style="left:972px;top:436px;width:36px;height:20px;background:#b9b9b9;"></div>
<svg class="i" style="left:986px;top:442px" width="8" height="8" viewBox="0 0 8 8"><path d="M0.6 0.4 L7.4 7.2 M7.4 0.4 L0.6 7.2" stroke="#fff" stroke-width="1.7" fill="none"/></svg>
<div class="b " style="left:2px;top:462px;width:1006px;height:32px;background:#f4f5f7;"></div>
<div class="b " style="left:2px;top:494px;width:1006px;height:1px;background:#dcdcdc;"></div>
<svg class="i" style="left:11px;top:470.8px" width="14" height="14" viewBox="0 0 14 14"><path d="M5.2 0.5 H8.8 V5.2 H13.5 V8.8 H8.8 V13.5 H5.2 V8.8 H0.5 V5.2 H5.2 Z" fill="#a9d59e" stroke="#98c98c" stroke-width=".6" opacity="1.0"/></svg>
<span class="t" id="t75" style="left:36.20px;top:470.5px;font-size:12px;line-height:16px;color:#9a9a9a;letter-spacing:-0.012px;">Dodaj</span>
<div class="b " style="left:78px;top:472.0px;width:1px;height:12px;background:#c8c8c8;"></div>
<svg class="i" style="left:85.8px;top:475.85px" width="6.4" height="3.7" viewBox="0 0 6.4 3.7"><path d="M0 0 H6.4 L3.2 3.7 Z" fill="#9a9a9a"/></svg>
<svg class="i" style="left:106px;top:470.7px" width="14" height="14" viewBox="0 0 14 14"><path d="M1.5 1.5 L12.5 12.3 M12.5 1.5 L1.5 12.3" stroke="#e04a2f" stroke-width="3.5" fill="none" opacity="0.45"/></svg>
<span class="t" id="t76" style="left:131.20px;top:470.5px;font-size:12px;line-height:16px;color:#9a9a9a;letter-spacing:-0.250px;transform:scaleX(0.9735);transform-origin:0 0;">Usuń</span>
<svg class="i" style="left:173.5px;top:469.5px" width="16" height="16" viewBox="0 0 16 16"><path d="M5.2 0 H10.9 V5.2 H15.6 L7.8 12.8 L0 5.2 H5.2 Z" fill="#e5492d"/><path d="M1 14.1 H15" stroke="#4cae3a" stroke-width="1.8"/><rect x="6" y="12.2" width="4" height="3.6" fill="#ead94a"/></svg>
<span class="t" id="t77" style="left:195.10px;top:470.5px;font-size:12px;line-height:16px;color:#383838;letter-spacing:-0.204px;">Programowanie</span>
<div class="b " style="left:283px;top:472.0px;width:1px;height:12px;background:#c8c8c8;"></div>
<svg class="i" style="left:288.8px;top:475.85px" width="6.4" height="3.7" viewBox="0 0 6.4 3.7"><path d="M0 0 H6.4 L3.2 3.7 Z" fill="#555"/></svg>
<svg class="i" style="left:308px;top:470.9px" width="14" height="14" viewBox="0 0 14 14"><circle cx="7" cy="7" r="6.9" fill="#5a8ec9"/><path d="M7 5.6 V11" stroke="#fff" stroke-width="2.1"/><circle cx="7" cy="3.5" r="1.25" fill="#fff"/></svg>
<span class="t" id="t78" style="left:327.50px;top:470.5px;font-size:12px;line-height:16px;color:#383838;letter-spacing:-0.043px;">Informacje</span>
<svg class="i" style="left:386.8px;top:475.85px" width="6.4" height="3.7" viewBox="0 0 6.4 3.7"><path d="M0 0 H6.4 L3.2 3.7 Z" fill="#555"/></svg>
<svg class="i" style="left:405.5px;top:470px" width="17" height="16" viewBox="0 0 17 16"><path d="M4.5 6.5 C4.5 3.4 6.3 2.2 9 2.2 H11.8 C14.2 2.2 15 3.2 15 5.4 V10.6 C15 12.8 14.2 13.8 11.8 13.8 H9.4" fill="none" stroke="#eb9c40" stroke-width="2.4"/><path d="M0.1 6 H8.9 L4.5 12.9 Z" fill="#ef9f3e"/><path d="M1 14.6 H7.8" stroke="#ee9a3a" stroke-width="1.2"/></svg>
<span class="t" id="t79" style="left:431.00px;top:470.5px;font-size:12px;line-height:16px;color:#383838;letter-spacing:-0.087px;">Uruchom ponownie</span>
<svg class="i" style="left:552px;top:471px" width="11" height="15" viewBox="0 0 11 15"><path d="M3.5 0.5 H7.5 L5.5 6 H10.5 L4.5 14.5 L5.5 8.5 H0.5 Z" fill="none" stroke="#cdcdcd" stroke-width="1" stroke-linejoin="round"/></svg>
<span class="t" id="t80" style="left:571.50px;top:470.5px;font-size:12px;line-height:16px;color:#383838;letter-spacing:-0.240px;">Rozprogramuj</span>
<svg class="i" style="left:648.8px;top:475.85px" width="6.4" height="3.7" viewBox="0 0 6.4 3.7"><path d="M0 0 H6.4 L3.2 3.7 Z" fill="#666"/></svg>
<svg class="i" style="left:666.7px;top:470px" width="16.3" height="15.5" viewBox="0 0 22 21"><defs><linearGradient id="pg666" x1="0" y1="0" x2="0" y2="1"><stop offset="0" stop-color="#c2c2c2"/><stop offset=".5" stop-color="#9c9c9c"/><stop offset="1" stop-color="#cdcdcd"/></linearGradient></defs><g opacity="0.8"><rect x="5.8" y="0.4" width="11" height="8" fill="#fff" stroke="#d4d4d4" stroke-width=".8"/><path d="M4 7.8 H18 Q21.8 8.2 21.8 12 V17 Q21.8 17.8 21 17.8 H1 Q0.2 17.8 0.2 17 V12 Q0.2 8.2 4 7.8 Z" fill="url(#pg666)"/><path d="M4.5 8.3 H17.5" stroke="#5e5e5e" stroke-width="1.1"/><path d="M5.2 14.4 H16.8 L19 20.3 H3 Z" fill="#fdfdfd" stroke="#cfcfcf" stroke-width=".7"/><path d="M6 16.8 H14.5 M5.6 18.4 H13" stroke="#dcdcdc" stroke-width=".8"/><circle cx="18.2" cy="10.9" r="1.05" fill="#44c544"/></g></svg>
<span class="t" id="t81" style="left:693.10px;top:470.5px;font-size:12px;line-height:16px;color:#383838;letter-spacing:-0.165px;">Drukuj</span>
<svg class="i" style="left:793px;top:473px" width="16" height="11" viewBox="0 0 16 11"><path d="M15.5 5.5 H1.5 M6 1 L1.5 5.5 L6 10" fill="none" stroke="#3b78c4" stroke-width="1.5"/></svg>
<svg class="i" style="left:826.5px;top:473px" width="16" height="11" viewBox="0 0 16 11"><path d="M0.5 5.5 H14.5 M10 1 L14.5 5.5 L10 10" fill="none" stroke="#9bb9e0" stroke-width="1.5"/></svg>
<div class="b " style="left:853px;top:467px;width:149px;height:22px;background:#ffffff;border:1px solid #e3e3e3;"></div>
<span class="t" id="t82" style="left:858.00px;top:470.5px;font-size:12px;line-height:16px;color:#9a9a9a;letter-spacing:-0.250px;transform:scaleX(0.9412);transform-origin:0 0;">Szukaj</span>
<svg class="i" style="left:981px;top:471.5px" width="15" height="15" viewBox="0 0 15 15"><circle cx="10" cy="5" r="4.3" fill="#f1f1f1" stroke="#9a9a9a" stroke-width="1.2"/><path d="M6.6 8.2 L2 11.4" stroke="#8c8c8c" stroke-width="2.1" stroke-linecap="round"/></svg>
<div class="b " style="left:1007px;top:462px;width:1px;height:308px;background:#dcdcdc;"></div>
<div class="b " style="left:2px;top:495px;width:289px;height:23px;background:#e6e6e6;"></div>
<div class="b " style="left:2px;top:518px;width:289px;height:1px;background:#cfcfcf;"></div>
<div class="b " style="left:2px;top:462px;width:1px;height:308px;background:#dcdcdc;"></div>
<svg class="i" style="left:9px;top:502px" width="15" height="10" viewBox="0 0 15 10"><path d="M0.6 1.4 H14.4" stroke="#1455b5" stroke-width="2.2" stroke-linecap="round"/><path d="M2.6 2 V8 M7.5 2 V8 M12.4 2 V8" stroke="#1455b5" stroke-width="1.2"/><g fill="#1455b5"><rect x="1.2" y="6.8" width="2.8" height="2.8"/><rect x="6.1" y="6.8" width="2.8" height="2.8"/><rect x="11" y="6.8" width="2.8" height="2.8"/></g></svg>
<span class="t" id="t83" style="left:29.50px;top:499.0px;font-size:13px;line-height:16px;color:#484848;font-weight:700;letter-spacing:-0.250px;transform:scaleX(0.9326);transform-origin:0 0;">Szkielet topologii</span>
<div class="b " style="left:291px;top:495px;width:1px;height:275px;background:#e0e0e0;"></div>
<div class="b " style="left:292px;top:495px;width:12px;height:275px;background:#ffffff;"></div>
<div class="b " style="left:292px;top:511px;width:12px;height:106px;background:#e6e6e6;"></div>
<svg class="i" style="left:294px;top:499.5px" width="8" height="7" viewBox="0 0 8 7"><path d="M1.1 5.2 L4 2.2 L6.9 5.2" fill="none" stroke="#2a2a2a" stroke-width="1.9"/></svg>
<svg class="i" style="left:294px;top:758px" width="8" height="7" viewBox="0 0 8 7"><path d="M1.1 1.6 L4 4.6 L6.9 1.6" fill="none" stroke="#2a2a2a" stroke-width="1.9"/></svg>
<div class="b " style="left:304px;top:495px;width:3px;height:275px;background:#dcdde0;"></div>
<svg class="i" style="left:7.5px;top:527.8px" width="7" height="9" viewBox="0 0 7 9"><path d="M0.7 0.7 L5.2 4.2 L0.7 7.7 Z" fill="#fff" stroke="#c6c6c6" stroke-width="1"/></svg>
<svg class="i" style="left:21px;top:524px" width="17" height="15" viewBox="0 0 17 15"><path d="M1 14 V1.6 Q1 0.2 2.4 0.2 H7.2 L8.8 1.8 H14.2 Q15 1.8 15 2.8 V4 H2.7 L2 14 Z" fill="#6f6f6f"/><path d="M4.6 5.2 H16.2 L14.6 13.9 H3 Z" fill="#ebb55f"/></svg>
<span class="t" id="t84" style="left:41.50px;top:524.0px;font-size:12px;line-height:16px;color:#383838;letter-spacing:-0.022px;">Katalog dynamiczny</span>
<svg class="i" style="left:8px;top:551.3px" width="6" height="6" viewBox="0 0 6 6"><path d="M5.8 0 V5.8 H0 Z" fill="#333"/></svg>
<svg class="i" style="left:21px;top:548px" width="15" height="15" viewBox="0 0 15 15"><rect x="0.5" y="0.5" width="14" height="14" fill="#ececec" stroke="#1f4fa8"/><rect x="1.5" y="1.5" width="12" height="12" fill="none" stroke="#fafafa" stroke-width=".8"/><rect x="5.1" y="5" width="5" height="4.8" fill="#0b5cc0"/><path d="M7.6 1 V5.2" stroke="#0b5cc0" stroke-width="1.3"/></svg>
<span class="t" id="t85" style="left:42.00px;top:548.0px;font-size:12px;line-height:16px;color:#383838;letter-spacing:-0.180px;">1 IP obszar</span>
<svg class="i" style="left:14px;top:575.8px" width="6" height="6" viewBox="0 0 6 6"><path d="M5.8 0 V5.8 H0 Z" fill="#333"/></svg>
<svg class="i" style="left:28px;top:572px" width="14" height="15" viewBox="0 0 14 15"><path d="M2.5 1.5 V13.5" stroke="#1e9a2e" stroke-width="2.6" stroke-linecap="round"/><path d="M2.5 3.5 H9 M2.5 11.4 H9" stroke="#1e9a2e" stroke-width="1.4"/><circle cx="10.5" cy="3.5" r="2.6" fill="#1e9a2e"/><circle cx="10.5" cy="11.4" r="2.6" fill="#1e9a2e"/></svg>
<span class="t" id="t86" style="left:48.10px;top:572.0px;font-size:12px;line-height:16px;color:#383838;letter-spacing:-0.226px;">1.1 TP linia</span>
<svg class="i" style="left:22px;top:599.5px" width="6" height="6" viewBox="0 0 6 6"><path d="M5.8 0 V5.8 H0 Z" fill="#333"/></svg>
<svg class="i" style="left:35.5px;top:597px" width="16" height="12" viewBox="0 0 16 12"><path d="M0.4 5.5 H3" stroke="#8a8a8a" stroke-width="1.5"/><rect x="3.3" y="0.5" width="12" height="11" fill="#d2d2d2" stroke="#858585"/><rect x="2.8" y="0" width="2.4" height="12" fill="#858585"/></svg>
<span class="t" id="t87" style="left:56.00px;top:596.0px;font-size:12px;line-height:16px;color:#383838;letter-spacing:0.062px;width:234.00px;overflow:hidden;">1.1.1 Switching actuator, 24-gang / blind act.</span>
<div class="b " style="left:3px;top:615px;width:288px;height:24px;background:#e5e5e5;"></div>
<svg class="i" style="left:29.5px;top:622.8px" width="7" height="9" viewBox="0 0 7 9"><path d="M0.7 0.7 L5.2 4.2 L0.7 7.7 Z" fill="#fff" stroke="#c6c6c6" stroke-width="1"/></svg>
<svg class="i" style="left:44px;top:620px" width="14" height="14" viewBox="0 0 14 14"><rect x="0" y="0" width="3.9" height="14" fill="#cfcfcf"/><rect x="0" y="0" width="3.9" height="1" fill="#8f8f8f"/><rect x="0" y="13" width="3.9" height="1" fill="#8f8f8f"/><path d="M0.25 1 V13 M3.65 1 V13" stroke="#bdbdbd" stroke-width=".5"/><rect x="5.05" y="0" width="3.9" height="14" fill="#cfcfcf"/><rect x="5.05" y="0" width="3.9" height="1" fill="#8f8f8f"/><rect x="5.05" y="13" width="3.9" height="1" fill="#8f8f8f"/><path d="M5.3 1 V13 M8.7 1 V13" stroke="#bdbdbd" stroke-width=".5"/><rect x="10.1" y="0" width="3.9" height="14" fill="#cfcfcf"/><rect x="10.1" y="0" width="3.9" height="1" fill="#8f8f8f"/><rect x="10.1" y="13" width="3.9" height="1" fill="#8f8f8f"/><path d="M10.35 1 V13 M13.75 1 V13" stroke="#bdbdbd" stroke-width=".5"/></svg>
<span class="t" id="t88" style="left:63.50px;top:620.0px;font-size:12px;line-height:16px;color:#383838;letter-spacing:-0.156px;">Relay output 1 (...)</span>
<svg class="i" style="left:29.5px;top:646.8px" width="7" height="9" viewBox="0 0 7 9"><path d="M0.7 0.7 L5.2 4.2 L0.7 7.7 Z" fill="#fff" stroke="#c6c6c6" stroke-width="1"/></svg>
<svg class="i" style="left:44px;top:644px" width="14" height="14" viewBox="0 0 14 14"><rect x="0" y="0" width="3.9" height="14" fill="#cfcfcf"/><rect x="0" y="0" width="3.9" height="1" fill="#8f8f8f"/><rect x="0" y="13" width="3.9" height="1" fill="#8f8f8f"/><path d="M0.25 1 V13 M3.65 1 V13" stroke="#bdbdbd" stroke-width=".5"/><rect x="5.05" y="0" width="3.9" height="14" fill="#cfcfcf"/><rect x="5.05" y="0" width="3.9" height="1" fill="#8f8f8f"/><rect x="5.05" y="13" width="3.9" height="1" fill="#8f8f8f"/><path d="M5.3 1 V13 M8.7 1 V13" stroke="#bdbdbd" stroke-width=".5"/><rect x="10.1" y="0" width="3.9" height="14" fill="#cfcfcf"/><rect x="10.1" y="0" width="3.9" height="1" fill="#8f8f8f"/><rect x="10.1" y="13" width="3.9" height="1" fill="#8f8f8f"/><path d="M10.35 1 V13 M13.75 1 V13" stroke="#bdbdbd" stroke-width=".5"/></svg>
<span class="t" id="t89" style="left:63.50px;top:644.0px;font-size:12px;line-height:16px;color:#383838;letter-spacing:-0.156px;">Relay output 2 (...)</span>
<svg class="i" style="left:29.5px;top:670.8px" width="7" height="9" viewBox="0 0 7 9"><path d="M0.7 0.7 L5.2 4.2 L0.7 7.7 Z" fill="#fff" stroke="#c6c6c6" stroke-width="1"/></svg>
<svg class="i" style="left:44px;top:668px" width="14" height="14" viewBox="0 0 14 14"><rect x="0" y="0" width="3.9" height="14" fill="#cfcfcf"/><rect x="0" y="0" width="3.9" height="1" fill="#8f8f8f"/><rect x="0" y="13" width="3.9" height="1" fill="#8f8f8f"/><path d="M0.25 1 V13 M3.65 1 V13" stroke="#bdbdbd" stroke-width=".5"/><rect x="5.05" y="0" width="3.9" height="14" fill="#cfcfcf"/><rect x="5.05" y="0" width="3.9" height="1" fill="#8f8f8f"/><rect x="5.05" y="13" width="3.9" height="1" fill="#8f8f8f"/><path d="M5.3 1 V13 M8.7 1 V13" stroke="#bdbdbd" stroke-width=".5"/><rect x="10.1" y="0" width="3.9" height="14" fill="#cfcfcf"/><rect x="10.1" y="0" width="3.9" height="1" fill="#8f8f8f"/><rect x="10.1" y="13" width="3.9" height="1" fill="#8f8f8f"/><path d="M10.35 1 V13 M13.75 1 V13" stroke="#bdbdbd" stroke-width=".5"/></svg>
<span class="t" id="t90" style="left:63.50px;top:668.0px;font-size:12px;line-height:16px;color:#383838;letter-spacing:-0.156px;">Relay output 3 (...)</span>
<svg class="i" style="left:29.5px;top:694.8px" width="7" height="9" viewBox="0 0 7 9"><path d="M0.7 0.7 L5.2 4.2 L0.7 7.7 Z" fill="#fff" stroke="#c6c6c6" stroke-width="1"/></svg>
<svg class="i" style="left:44px;top:692px" width="14" height="14" viewBox="0 0 14 14"><rect x="0" y="0" width="3.9" height="14" fill="#cfcfcf"/><rect x="0" y="0" width="3.9" height="1" fill="#8f8f8f"/><rect x="0" y="13" width="3.9" height="1" fill="#8f8f8f"/><path d="M0.25 1 V13 M3.65 1 V13" stroke="#bdbdbd" stroke-width=".5"/><rect x="5.05" y="0" width="3.9" height="14" fill="#cfcfcf"/><rect x="5.05" y="0" width="3.9" height="1" fill="#8f8f8f"/><rect x="5.05" y="13" width="3.9" height="1" fill="#8f8f8f"/><path d="M5.3 1 V13 M8.7 1 V13" stroke="#bdbdbd" stroke-width=".5"/><rect x="10.1" y="0" width="3.9" height="14" fill="#cfcfcf"/><rect x="10.1" y="0" width="3.9" height="1" fill="#8f8f8f"/><rect x="10.1" y="13" width="3.9" height="1" fill="#8f8f8f"/><path d="M10.35 1 V13 M13.75 1 V13" stroke="#bdbdbd" stroke-width=".5"/></svg>
<span class="t" id="t91" style="left:63.50px;top:692.0px;font-size:12px;line-height:16px;color:#383838;letter-spacing:-0.156px;">Relay output 4 (...)</span>
<svg class="i" style="left:29.5px;top:718.8px" width="7" height="9" viewBox="0 0 7 9"><path d="M0.7 0.7 L5.2 4.2 L0.7 7.7 Z" fill="#fff" stroke="#c6c6c6" stroke-width="1"/></svg>
<svg class="i" style="left:44px;top:716px" width="14" height="14" viewBox="0 0 14 14"><rect x="0" y="0" width="3.9" height="14" fill="#cfcfcf"/><rect x="0" y="0" width="3.9" height="1" fill="#8f8f8f"/><rect x="0" y="13" width="3.9" height="1" fill="#8f8f8f"/><path d="M0.25 1 V13 M3.65 1 V13" stroke="#bdbdbd" stroke-width=".5"/><rect x="5.05" y="0" width="3.9" height="14" fill="#cfcfcf"/><rect x="5.05" y="0" width="3.9" height="1" fill="#8f8f8f"/><rect x="5.05" y="13" width="3.9" height="1" fill="#8f8f8f"/><path d="M5.3 1 V13 M8.7 1 V13" stroke="#bdbdbd" stroke-width=".5"/><rect x="10.1" y="0" width="3.9" height="14" fill="#cfcfcf"/><rect x="10.1" y="0" width="3.9" height="1" fill="#8f8f8f"/><rect x="10.1" y="13" width="3.9" height="1" fill="#8f8f8f"/><path d="M10.35 1 V13 M13.75 1 V13" stroke="#bdbdbd" stroke-width=".5"/></svg>
<span class="t" id="t92" style="left:63.50px;top:716.0px;font-size:12px;line-height:16px;color:#383838;letter-spacing:-0.099px;">Relay outputs 5 + 6 (...)</span>
<svg class="i" style="left:29.5px;top:742.8px" width="7" height="9" viewBox="0 0 7 9"><path d="M0.7 0.7 L5.2 4.2 L0.7 7.7 Z" fill="#fff" stroke="#c6c6c6" stroke-width="1"/></svg>
<svg class="i" style="left:44px;top:740px" width="14" height="14" viewBox="0 0 14 14"><rect x="0" y="0" width="3.9" height="14" fill="#cfcfcf"/><rect x="0" y="0" width="3.9" height="1" fill="#8f8f8f"/><rect x="0" y="13" width="3.9" height="1" fill="#8f8f8f"/><path d="M0.25 1 V13 M3.65 1 V13" stroke="#bdbdbd" stroke-width=".5"/><rect x="5.05" y="0" width="3.9" height="14" fill="#cfcfcf"/><rect x="5.05" y="0" width="3.9" height="1" fill="#8f8f8f"/><rect x="5.05" y="13" width="3.9" height="1" fill="#8f8f8f"/><path d="M5.3 1 V13 M8.7 1 V13" stroke="#bdbdbd" stroke-width=".5"/><rect x="10.1" y="0" width="3.9" height="14" fill="#cfcfcf"/><rect x="10.1" y="0" width="3.9" height="1" fill="#8f8f8f"/><rect x="10.1" y="13" width="3.9" height="1" fill="#8f8f8f"/><path d="M10.35 1 V13 M13.75 1 V13" stroke="#bdbdbd" stroke-width=".5"/></svg>
<span class="t" id="t93" style="left:63.50px;top:740.0px;font-size:12px;line-height:16px;color:#383838;letter-spacing:-0.099px;">Relay outputs 7 + 8 (...)</span>
<div class="b" style="left:3px;top:760px;width:288px;height:10px;overflow:hidden;"><svg class="i" style="left:41px;top:4px" width="14" height="14" viewBox="0 0 14 14"><g fill="#cfcfcf"><rect x="0" y="0" width="3.9" height="14"/><rect x="5.05" y="0" width="3.9" height="14"/><rect x="10.1" y="0" width="3.9" height="14"/></g><g fill="#8f8f8f"><rect x="0" y="0" width="3.9" height="1"/><rect x="5.05" y="0" width="3.9" height="1"/><rect x="10.1" y="0" width="3.9" height="1"/></g></svg><svg class="i" style="left:26.5px;top:6.8px" width="7" height="9" viewBox="0 0 7 9"><path d="M0.7 0.7 L5.2 4.2 L0.7 7.7 Z" fill="#fff" stroke="#c6c6c6"/></svg><span class="t" style="left:60.5px;top:4px;line-height:16px;letter-spacing:-0.22px;color:#383838">Relay outputs 9 + 10 (...)</span></div>
<div class="b " style="left:307px;top:518px;width:701px;height:1px;background:#d6d6d6;"></div>
<div class="b " style="left:326px;top:495px;width:1px;height:23px;background:#dcdcdc;"></div>
<div class="b " style="left:386px;top:495px;width:1px;height:23px;background:#dcdcdc;"></div>
<div class="b " style="left:551px;top:495px;width:1px;height:23px;background:#dcdcdc;"></div>
<div class="b " style="left:671px;top:495px;width:1px;height:23px;background:#dcdcdc;"></div>
<div class="b " style="left:771px;top:495px;width:1px;height:23px;background:#dcdcdc;"></div>
<div class="b " style="left:851px;top:495px;width:1px;height:23px;background:#dcdcdc;"></div>
<div class="b " style="left:897px;top:495px;width:1px;height:23px;background:#dcdcdc;"></div>
<div class="b " style="left:917px;top:495px;width:1px;height:23px;background:#dcdcdc;"></div>
<div class="b " style="left:937px;top:495px;width:1px;height:23px;background:#dcdcdc;"></div>
<div class="b " style="left:957px;top:495px;width:1px;height:23px;background:#dcdcdc;"></div>
<div class="b " style="left:977px;top:495px;width:1px;height:23px;background:#dcdcdc;"></div>
<div class="b " style="left:997px;top:495px;width:1px;height:23px;background:#dcdcdc;"></div>
<span class="t" id="t94" style="left:332.00px;top:499.5px;font-size:12px;line-height:16px;color:#262626;font-weight:700;letter-spacing:-0.103px;">Numer</span>
<span class="t" id="t95" style="left:392.10px;top:499.5px;font-size:12px;line-height:16px;color:#262626;font-weight:700;letter-spacing:-0.192px;">Nazwa</span>
<span class="t" id="t96" style="left:557.00px;top:499.5px;font-size:12px;line-height:16px;color:#262626;font-weight:700;letter-spacing:-0.357px;">Funkcja obiektu</span>
<span class="t" id="t97" style="left:676.80px;top:499.5px;font-size:12px;line-height:16px;color:#262626;font-weight:700;letter-spacing:-0.368px;">Opis</span>
<span class="t" id="t98" style="left:776.90px;top:499.5px;font-size:12px;line-height:16px;color:#262626;font-weight:700;letter-spacing:-0.261px;width:74.60px;overflow:hidden;">Adres grupowy</span>
<span class="t" id="t99" style="left:856.50px;top:499.5px;font-size:12px;line-height:16px;color:#262626;font-weight:700;letter-spacing:-0.261px;width:41.00px;overflow:hidden;">Długość</span>
<span class="t" id="t100" style="left:902.90px;top:499.5px;font-size:12px;line-height:16px;color:#262626;font-weight:700;letter-spacing:-0.261px;">C</span>
<span class="t" id="t101" style="left:922.50px;top:499.5px;font-size:12px;line-height:16px;color:#262626;font-weight:700;letter-spacing:-0.261px;">R</span>
<span class="t" id="t102" style="left:943.19px;top:499.5px;font-size:12px;line-height:16px;color:#262626;font-weight:700;">W</span>
<span class="t" id="t103" style="left:962.30px;top:499.5px;font-size:12px;line-height:16px;color:#262626;font-weight:700;letter-spacing:-0.261px;">T</span>
<span class="t" id="t104" style="left:982.50px;top:499.5px;font-size:12px;line-height:16px;color:#262626;font-weight:700;letter-spacing:-0.261px;">U</span>
<span class="t" id="t105" style="left:1002.50px;top:499.5px;font-size:12px;line-height:16px;color:#262626;font-weight:700;letter-spacing:-0.261px;width:5.50px;overflow:hidden;">Typ danych</span>
<div class="b " style="left:307px;top:494px;width:701px;height:1px;background:#dcdcdc;"></div>
<svg class="i" style="left:375.4px;top:503.6px" width="5.6" height="3.8" viewBox="0 0 5.6 3.8"><path d="M0 3.8 H5.6 L2.8 0 Z" fill="#444"/></svg>
<div class="b " style="left:307px;top:539px;width:701px;height:20px;background:#f3f6fb;"></div>
<svg class="i" style="left:309px;top:523.0px" width="15" height="14" viewBox="0 0 15 14"><rect x="0.5" y="0.5" width="6.2" height="12.4" fill="#e9b961" stroke="#d69c48"/><rect x="11.4" y="0.5" width="3.2" height="12.4" fill="#a9cef1" stroke="#6c98c9"/><path d="M7.2 2.9 H11.2" stroke="#cb9040" stroke-width="1.6"/><path d="M6.6 10 H11" stroke="#6c98c9" stroke-width="1.6"/></svg>
<span class="t" id="t106" style="left:326.50px;top:521.5px;font-size:12px;line-height:16px;color:#383838;letter-spacing:-0.344px;">322</span>
<span class="t" id="t107" style="left:386.50px;top:521.5px;font-size:12px;line-height:16px;color:#383838;letter-spacing:-0.246px;">Switching 1 &nbsp;(...) - Input</span>
<span class="t" id="t108" style="left:551.50px;top:521.5px;font-size:12px;line-height:16px;color:#383838;letter-spacing:-0.151px;">Switching</span>
<span class="t" id="t109" style="left:674.90px;top:521.5px;font-size:12px;line-height:16px;color:#383838;letter-spacing:-0.368px;">ETS u swojego o...</span>
<span class="t" id="t110" style="left:771.50px;top:519.5px;font-size:12px;line-height:16px;color:#383838;letter-spacing:0.259px;">0/0/1</span>
<span class="t" id="t111" style="left:851.10px;top:521.5px;font-size:12px;line-height:16px;color:#383838;letter-spacing:-0.058px;">1 bit</span>
<span class="t" id="t112" style="left:897.36px;top:521.5px;font-size:12px;line-height:16px;color:#383838;">C</span>
<span class="t" id="t113" style="left:919.50px;top:521.5px;font-size:12px;line-height:16px;color:#383838;letter-spacing:-0.187px;">-</span>
<span class="t" id="t114" style="left:938.69px;top:521.5px;font-size:12px;line-height:16px;color:#383838;">W</span>
<span class="t" id="t115" style="left:959.50px;top:521.5px;font-size:12px;line-height:16px;color:#383838;letter-spacing:-0.187px;">-</span>
<span class="t" id="t116" style="left:978.96px;top:521.5px;font-size:12px;line-height:16px;color:#383838;">U</span>
<span class="t" id="t117" style="left:998.10px;top:521.5px;font-size:12px;line-height:16px;color:#383838;letter-spacing:-0.187px;width:9.90px;overflow:hidden;">switch</span>
<svg class="i" style="left:309px;top:543.0px" width="15" height="14" viewBox="0 0 15 14"><rect x="0.5" y="0.5" width="6.2" height="12.4" fill="#e9b961" stroke="#d69c48"/><rect x="11.4" y="0.5" width="3.2" height="12.4" fill="#a9cef1" stroke="#6c98c9"/><path d="M7.2 2.9 H11.2" stroke="#cb9040" stroke-width="1.6"/><path d="M6.6 10 H11" stroke="#6c98c9" stroke-width="1.6"/></svg>
<span class="t" id="t118" style="left:326.50px;top:541.5px;font-size:12px;line-height:16px;color:#383838;letter-spacing:-0.344px;">323</span>
<span class="t" id="t119" style="left:386.50px;top:541.5px;font-size:12px;line-height:16px;color:#383838;letter-spacing:-0.212px;">Switching 1 &nbsp;(...) - Output</span>
<span class="t" id="t120" style="left:551.50px;top:541.5px;font-size:12px;line-height:16px;color:#383838;letter-spacing:-0.245px;">Switching feedback</span>
<span class="t" id="t121" style="left:851.10px;top:541.5px;font-size:12px;line-height:16px;color:#383838;letter-spacing:-0.058px;">1 bit</span>
<span class="t" id="t122" style="left:897.36px;top:541.5px;font-size:12px;line-height:16px;color:#383838;">C</span>
<span class="t" id="t123" style="left:918.16px;top:541.5px;font-size:12px;line-height:16px;color:#383838;">R</span>
<span class="t" id="t124" style="left:940.10px;top:541.5px;font-size:12px;line-height:16px;color:#383838;letter-spacing:-0.187px;">-</span>
<span class="t" id="t125" style="left:959.13px;top:541.5px;font-size:12px;line-height:16px;color:#383838;">T</span>
<span class="t" id="t126" style="left:978.96px;top:541.5px;font-size:12px;line-height:16px;color:#383838;">U</span>
<span class="t" id="t127" style="left:998.10px;top:541.5px;font-size:12px;line-height:16px;color:#383838;letter-spacing:-0.187px;width:9.90px;overflow:hidden;">switch</span>
<div class="b " style="left:307px;top:733px;width:701px;height:15px;background:#ffffff;border:1px solid #dcdddf;"></div>
<div class="b " style="left:324px;top:734px;width:579px;height:13px;background:#e4e4e4;"></div>
<svg class="i" style="left:312px;top:737px" width="6" height="7" viewBox="0 0 6 7"><path d="M4.6 0.9 L1.7 3.5 L4.6 6.1" fill="none" stroke="#2a2a2a" stroke-width="2"/></svg>
<svg class="i" style="left:997px;top:737px" width="6" height="7" viewBox="0 0 6 7"><path d="M1.4 0.9 L4.3 3.5 L1.4 6.1" fill="none" stroke="#2a2a2a" stroke-width="2"/></svg>
<div class="b " style="left:307px;top:747px;width:701px;height:23px;background:#f4f5f7;"></div>
<svg class="i" style="left:307px;top:747px" width="215" height="23" viewBox="0 0 215 23"><path d="M0 0 H121.5 L113 22.5 H0 Z" fill="#fff"/><path d="M121.5 0 L113 22.5 M121.5 0.5 H207.5 L199 22.5" stroke="#d6d6d6" stroke-width="1" fill="none"/></svg>
<span class="t" id="t128" style="left:317.50px;top:751.5px;font-size:12px;line-height:16px;color:#383838;letter-spacing:-0.030px;">Obiekty grupowe</span>
<span class="t" id="t129" style="left:440.50px;top:751.5px;font-size:12px;line-height:16px;color:#383838;letter-spacing:-0.229px;">Parametry</span>
<div class="b " style="left:2px;top:769px;width:418px;height:1px;background:#d6d6d6;"></div>
<div class="b " style="left:1px;top:770px;width:1045px;height:2px;background:#fcfcfc;"></div>
<div class="b " style="left:1px;top:772px;width:1045px;height:1px;background:#c8c8c8;"></div>
<div class="b " style="left:1px;top:773px;width:1045px;height:1px;background:#e6e6e6;"></div>
<div class="b " style="left:1px;top:774px;width:1045px;height:22px;background:#f2f2f2;"></div>
<div class="b " style="left:1px;top:796px;width:1045px;height:1px;background:#fafafa;"></div>
<span class="t" id="t130" style="left:5.50px;top:778.5px;font-size:10.5px;line-height:16px;color:#383838;letter-spacing:-0.250px;transform:scaleX(0.8951);transform-origin:0 0;">1.1 TP linia</span>
<span class="t" id="t131" style="left:337.50px;top:778.5px;font-size:10.5px;line-height:16px;color:#383838;letter-spacing:-0.250px;transform:scaleX(0.9558);transform-origin:0 0;">0/0/1 &nbsp;ETS u swojego opiekuna</span>
<div class="b " style="left:331px;top:778px;width:1px;height:14px;background:#d0d0d0;"></div>
<div class="b " style="left:662px;top:778px;width:1px;height:14px;background:#d0d0d0;"></div>
<div class="b " style="left:994px;top:778px;width:1px;height:14px;background:#d0d0d0;"></div>
<svg class="i" style="left:1028px;top:104px" width="8" height="10" viewBox="0 0 8 10"><path d="M6.5 1 L2 5 L6.5 9" fill="none" stroke="#7d7d7d" stroke-width="2.2"/></svg>
<svg class="i" style="left:1022.5px;top:125.5px" width="15" height="17" viewBox="0 0 15 17"><path d="M0.5 0.5 H9.5 L13.8 4.8 V16 H0.5 Z" fill="#fff" stroke="#cdcdcd"/><path d="M9.5 0.5 V4.8 H13.8" fill="#f3f3f3" stroke="#cdcdcd" stroke-width=".8"/><path d="M2.4 4 H7.6 M2.4 6.5 H6 M2.4 9 H6 M2.4 11.5 H6 M2.4 14 H6" stroke="#7a7a7a" stroke-width="1"/><path d="M8.3 8 V14.6" stroke="#4a90d9" stroke-width="1.7"/><path d="M10.8 10 V14.6" stroke="#ea9a3a" stroke-width="1.6"/><path d="M12.7 11.8 V14.6" stroke="#e8a24a" stroke-width="1"/></svg>
<svg class="i" style="left:1022px;top:146.5px" width="17" height="16" viewBox="0 0 17 16"><circle cx="10.8" cy="5.8" r="4.7" fill="#f4f4f4" stroke="#a39585" stroke-width="1.5"/><path d="M7 9.2 L1.2 13.8" stroke="#9c7b5c" stroke-width="2.4"/></svg>
<svg class="i" style="left:1022.5px;top:166.5px" width="15" height="15" viewBox="0 0 15 15"><rect x="0.4" y="0.4" width="14.2" height="14.2" fill="#ebebeb" stroke="#dadada" stroke-width=".8"/><rect x="2" y="2" width="7" height="4.6" fill="#cbcbcb"/><rect x="2" y="8" width="7" height="5" fill="#d2d2d2"/><rect x="10.4" y="2" width="2.8" height="11" fill="#cbcbcb"/></svg>
<svg class="i" style="left:1021.4px;top:185.6px" width="17" height="17" viewBox="0 0 17 17"><circle cx="8.5" cy="8.5" r="7.4" fill="#fdf1e2" stroke="#7d675a" stroke-width="1.7"/><path d="M8.6 3.6 V9.4 L6.8 11.6" fill="none" stroke="#4a4a4a" stroke-width="1.2"/></svg>
<svg class="i" style="left:1021.9px;top:205.8px" width="16" height="16" viewBox="0 0 16 16"><circle cx="8" cy="8" r="7.9" fill="#7fc07b"/><path d="M5.6 4.6 L11.8 8 L5.6 11.4 Z" fill="#fff"/></svg>
<svg class="i" style="left:1022.2px;top:225.2px" width="16.9" height="15.4" viewBox="0 0 16.9 15.4"><defs><linearGradient id="ug1022" x1="0" y1="0" x2="0" y2="1"><stop offset="0" stop-color="#f7c050"/><stop offset=".45" stop-color="#f2a238"/><stop offset="1" stop-color="#e98a22"/></linearGradient></defs><g transform="scale(0.77)" opacity="1.0"><path d="M3 18.6 L1 10 L4.6 11.3 C6 5 10 1.2 14.5 1.5 C18.6 2 20.1 8 19.5 13.2 C17.6 8.6 15 6.9 12.9 7.3 C11 7.7 10 10 9.8 13.1 L13.6 14.6 Z" fill="url(#ug1022)"/></g></svg>
</body></html>
